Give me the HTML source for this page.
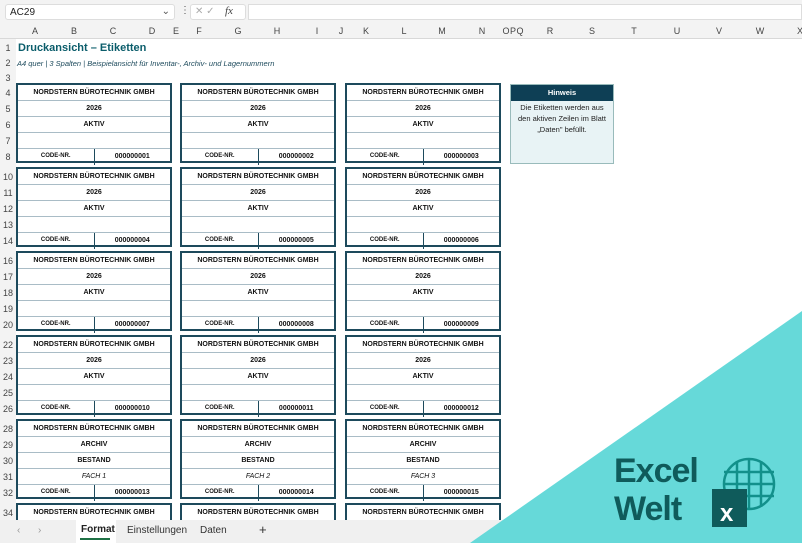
<!DOCTYPE html>
<html><head><meta charset="utf-8"><style>
*{margin:0;padding:0;box-sizing:border-box}
html,body{width:802px;height:543px;overflow:hidden}
body{background:#fff;font-family:"Liberation Sans",sans-serif;position:relative}
.a{position:absolute}
.top{left:0;top:0;width:802px;height:23px;background:#f3f3f3}
.nb{left:5px;top:4px;width:170px;height:16px;background:#fff;border:1px solid #ddd;border-radius:3px;font-size:10px;padding:2px 4px;color:#222}
.fb{left:248px;top:4px;width:554px;height:16px;background:#fff;border:1px solid #ddd}
.fx{left:190px;top:4px;width:56px;height:16px;background:#fff;border:1px solid #ddd;border-radius:3px;font-size:10px;color:#aaa}
.ch{left:0;top:23px;width:802px;height:16px;background:#f3f3f3;border-bottom:1px solid #d8d8d8}
.ch span{position:absolute;top:3px;font-size:9px;color:#444;transform:translateX(-50%)}
.rh{left:0;top:39px;width:16px;height:481px;background:#f3f3f3}
.rh span{position:absolute;left:0;width:16px;text-align:center;font-size:9px;color:#444}
.lab{position:absolute;width:156px;height:80px;border:2px solid #1d4a5c}
.r{height:16px;border-bottom:1px solid #a9bcc6;font-size:7px;font-weight:bold;text-align:center;line-height:15px;color:#111;display:flex}
.r:last-child{border-bottom:none}
.r div{flex:1}
.r .c1{border-right:1px solid #1d4a5c;font-size:6px}
.i{font-weight:normal;font-style:italic}
.tabs{left:0;top:520px;width:802px;height:23px;background:#f0f0f0;font-size:10px;color:#333;z-index:2}
</style></head><body>
<div class="a top"></div>
<div class="a nb">AC29<span style="position:absolute;right:4px;top:1px;color:#555">⌄</span></div>
<div class="a" style="left:180px;top:5px;font-size:10px;color:#555">⋮</div>
<div class="a fx"><span style="position:absolute;left:4px;top:1px">✕ ✓</span><span style="position:absolute;left:34px;top:0;font-style:italic;font-family:'Liberation Serif',serif;color:#444;font-size:11px">fx</span></div>
<div class="a fb"></div>
<div class="a ch">
<span style="left:35px">A</span><span style="left:74px">B</span><span style="left:113px">C</span><span style="left:152px">D</span><span style="left:176px">E</span><span style="left:199px">F</span><span style="left:238px">G</span><span style="left:277px">H</span><span style="left:317px">I</span><span style="left:341px">J</span><span style="left:366px">K</span><span style="left:404px">L</span><span style="left:442px">M</span><span style="left:482px">N</span><span style="left:506px">O</span><span style="left:513px">P</span><span style="left:520px">Q</span><span style="left:550px">R</span><span style="left:592px">S</span><span style="left:634px">T</span><span style="left:677px">U</span><span style="left:719px">V</span><span style="left:760px">W</span><span style="left:800px">X</span>
</div>
<div class="a rh">
<span style="top:4px">1</span><span style="top:19px">2</span><span style="top:34px">3</span><span style="top:49px">4</span><span style="top:65px">5</span><span style="top:81px">6</span><span style="top:97px">7</span><span style="top:113px">8</span>
<span style="top:133px">10</span><span style="top:149px">11</span><span style="top:165px">12</span><span style="top:181px">13</span><span style="top:197px">14</span>
<span style="top:217px">16</span><span style="top:233px">17</span><span style="top:249px">18</span><span style="top:265px">19</span><span style="top:281px">20</span>
<span style="top:301px">22</span><span style="top:317px">23</span><span style="top:333px">24</span><span style="top:349px">25</span><span style="top:365px">26</span>
<span style="top:385px">28</span><span style="top:401px">29</span><span style="top:417px">30</span><span style="top:433px">31</span><span style="top:449px">32</span>
<span style="top:469px">34</span>
</div>
<div class="a" style="left:18px;top:42px;font-size:11px;font-weight:bold;color:#0b5d6b">Druckansicht – Etiketten</div>
<div class="a" style="left:17px;top:59px;font-size:7.5px;font-style:italic;color:#1d4a5c">A4 quer | 3 Spalten | Beispielansicht für Inventar-, Archiv- und Lagernummern</div>

<div class="lab" style="left:16px;top:83px"><div class="r"><div>NORDSTERN BÜROTECHNIK GMBH</div></div><div class="r"><div>2026</div></div><div class="r"><div>AKTIV</div></div><div class="r"><div></div></div><div class="r"><div class="c1">CODE-NR.</div><div>000000001</div></div></div>
<div class="lab" style="left:180px;top:83px"><div class="r"><div>NORDSTERN BÜROTECHNIK GMBH</div></div><div class="r"><div>2026</div></div><div class="r"><div>AKTIV</div></div><div class="r"><div></div></div><div class="r"><div class="c1">CODE-NR.</div><div>000000002</div></div></div>
<div class="lab" style="left:345px;top:83px"><div class="r"><div>NORDSTERN BÜROTECHNIK GMBH</div></div><div class="r"><div>2026</div></div><div class="r"><div>AKTIV</div></div><div class="r"><div></div></div><div class="r"><div class="c1">CODE-NR.</div><div>000000003</div></div></div>

<div class="lab" style="left:16px;top:167px"><div class="r"><div>NORDSTERN BÜROTECHNIK GMBH</div></div><div class="r"><div>2026</div></div><div class="r"><div>AKTIV</div></div><div class="r"><div></div></div><div class="r"><div class="c1">CODE-NR.</div><div>000000004</div></div></div>
<div class="lab" style="left:180px;top:167px"><div class="r"><div>NORDSTERN BÜROTECHNIK GMBH</div></div><div class="r"><div>2026</div></div><div class="r"><div>AKTIV</div></div><div class="r"><div></div></div><div class="r"><div class="c1">CODE-NR.</div><div>000000005</div></div></div>
<div class="lab" style="left:345px;top:167px"><div class="r"><div>NORDSTERN BÜROTECHNIK GMBH</div></div><div class="r"><div>2026</div></div><div class="r"><div>AKTIV</div></div><div class="r"><div></div></div><div class="r"><div class="c1">CODE-NR.</div><div>000000006</div></div></div>

<div class="lab" style="left:16px;top:251px"><div class="r"><div>NORDSTERN BÜROTECHNIK GMBH</div></div><div class="r"><div>2026</div></div><div class="r"><div>AKTIV</div></div><div class="r"><div></div></div><div class="r"><div class="c1">CODE-NR.</div><div>000000007</div></div></div>
<div class="lab" style="left:180px;top:251px"><div class="r"><div>NORDSTERN BÜROTECHNIK GMBH</div></div><div class="r"><div>2026</div></div><div class="r"><div>AKTIV</div></div><div class="r"><div></div></div><div class="r"><div class="c1">CODE-NR.</div><div>000000008</div></div></div>
<div class="lab" style="left:345px;top:251px"><div class="r"><div>NORDSTERN BÜROTECHNIK GMBH</div></div><div class="r"><div>2026</div></div><div class="r"><div>AKTIV</div></div><div class="r"><div></div></div><div class="r"><div class="c1">CODE-NR.</div><div>000000009</div></div></div>

<div class="lab" style="left:16px;top:335px"><div class="r"><div>NORDSTERN BÜROTECHNIK GMBH</div></div><div class="r"><div>2026</div></div><div class="r"><div>AKTIV</div></div><div class="r"><div></div></div><div class="r"><div class="c1">CODE-NR.</div><div>000000010</div></div></div>
<div class="lab" style="left:180px;top:335px"><div class="r"><div>NORDSTERN BÜROTECHNIK GMBH</div></div><div class="r"><div>2026</div></div><div class="r"><div>AKTIV</div></div><div class="r"><div></div></div><div class="r"><div class="c1">CODE-NR.</div><div>000000011</div></div></div>
<div class="lab" style="left:345px;top:335px"><div class="r"><div>NORDSTERN BÜROTECHNIK GMBH</div></div><div class="r"><div>2026</div></div><div class="r"><div>AKTIV</div></div><div class="r"><div></div></div><div class="r"><div class="c1">CODE-NR.</div><div>000000012</div></div></div>

<div class="lab" style="left:16px;top:419px"><div class="r"><div>NORDSTERN BÜROTECHNIK GMBH</div></div><div class="r"><div>ARCHIV</div></div><div class="r"><div>BESTAND</div></div><div class="r"><div class="i">FACH 1</div></div><div class="r"><div class="c1">CODE-NR.</div><div>000000013</div></div></div>
<div class="lab" style="left:180px;top:419px"><div class="r"><div>NORDSTERN BÜROTECHNIK GMBH</div></div><div class="r"><div>ARCHIV</div></div><div class="r"><div>BESTAND</div></div><div class="r"><div class="i">FACH 2</div></div><div class="r"><div class="c1">CODE-NR.</div><div>000000014</div></div></div>
<div class="lab" style="left:345px;top:419px"><div class="r"><div>NORDSTERN BÜROTECHNIK GMBH</div></div><div class="r"><div>ARCHIV</div></div><div class="r"><div>BESTAND</div></div><div class="r"><div class="i">FACH 3</div></div><div class="r"><div class="c1">CODE-NR.</div><div>000000015</div></div></div>

<div class="lab" style="left:16px;top:503px;height:30px"><div class="r"><div>NORDSTERN BÜROTECHNIK GMBH</div></div></div>
<div class="lab" style="left:180px;top:503px;height:30px"><div class="r"><div>NORDSTERN BÜROTECHNIK GMBH</div></div></div>
<div class="lab" style="left:345px;top:503px;height:30px"><div class="r"><div>NORDSTERN BÜROTECHNIK GMBH</div></div></div>

<div class="a" style="left:510px;top:84px;width:104px;height:80px;background:#e8f3f5;border:1px solid #9bb">
<div style="background:#0e3f55;color:#fff;height:16px;font-size:7.5px;font-weight:bold;text-align:center;line-height:16px">Hinweis</div>
<div style="font-size:7.5px;text-align:center;line-height:11px;padding-top:1px;color:#222;white-space:nowrap">Die Etiketten werden aus<br>den aktiven Zeilen im Blatt<br>„Daten" befüllt.</div>
</div>

<div class="a tabs">
<span class="a" style="left:17px;top:5px;color:#999">‹</span><span class="a" style="left:38px;top:5px;color:#999">›</span>
<div class="a" style="left:76px;top:0;width:40px;height:23px;background:#fff"></div>
<span class="a" style="left:81px;top:4px;font-weight:bold;color:#222">Format</span>
<div class="a" style="left:80px;top:18px;width:30px;height:2px;background:#1e7145"></div>
<span class="a" style="left:127px;top:5px">Einstellungen</span>
<span class="a" style="left:200px;top:5px">Daten</span>
<span class="a" style="left:259px;top:2px;font-size:13px">+</span>
</div>

<svg class="a" style="left:0;top:0;z-index:3" width="802" height="543">
<polygon points="470,543 802,311 802,543" fill="#66d9d9"/>
<text x="614" y="482" font-family="Liberation Sans" font-weight="bold" font-size="34" fill="#0f5b5b" letter-spacing="-1">Excel</text>
<text x="614" y="520" font-family="Liberation Sans" font-weight="bold" font-size="34" fill="#0f5b5b" letter-spacing="-1">Welt</text>
<g stroke="#12908b" stroke-width="2.5" fill="none">
<circle cx="749" cy="484" r="25"/>
<line x1="724" y1="472" x2="774" y2="472"/><line x1="724" y1="484" x2="774" y2="484"/><line x1="724" y1="496" x2="774" y2="496"/>
<line x1="737" y1="461" x2="737" y2="507"/><line x1="749" y1="459" x2="749" y2="509"/><line x1="761" y1="461" x2="761" y2="507"/>
</g>
<rect x="712" y="489" width="35" height="38" fill="#0f5b5b"/>
<text x="720" y="521" font-family="Liberation Sans" font-weight="bold" font-size="24" fill="#fff">x</text>
</svg>
</body></html>
